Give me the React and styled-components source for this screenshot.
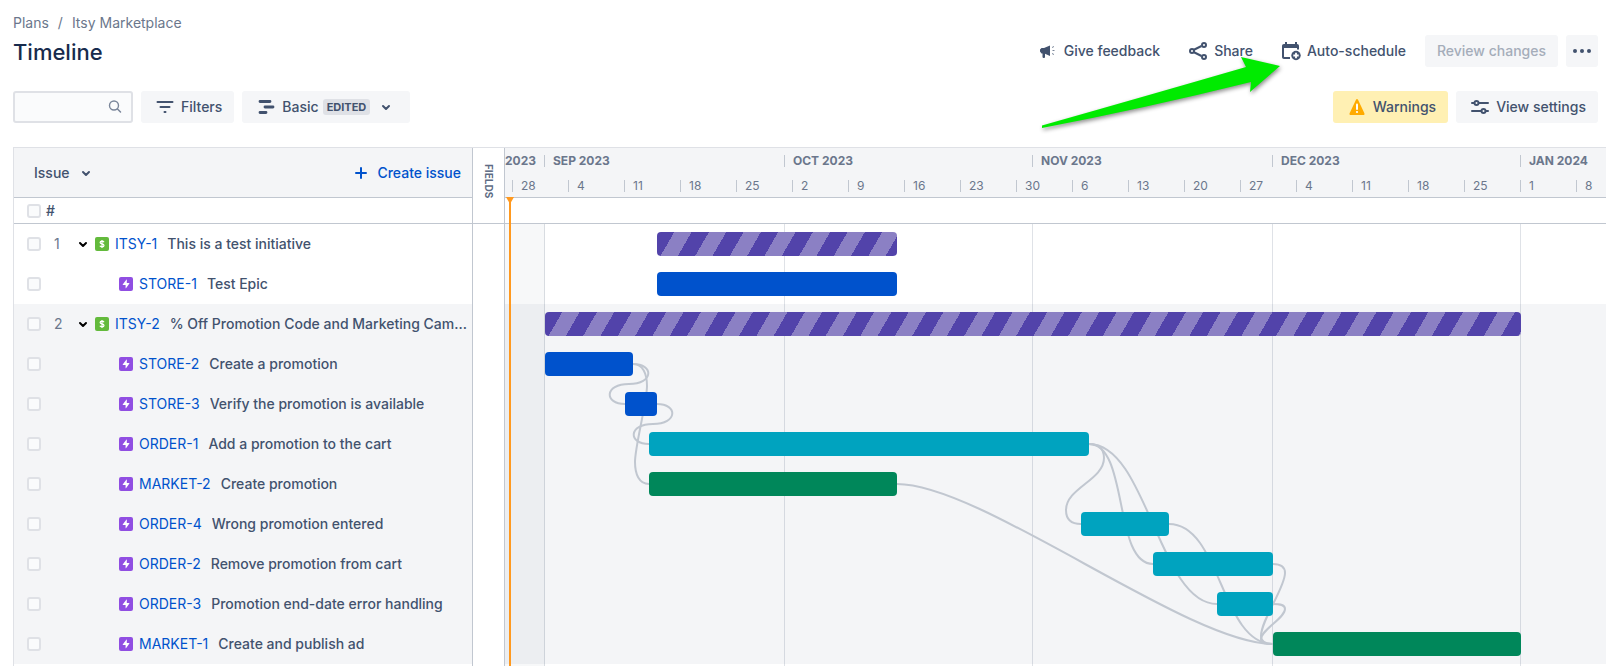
import React from "react";
import styled, { createGlobalStyle, css } from "styled-components";

const DAY = 8;
const ROW = 40;

const Global = createGlobalStyle`
  * { box-sizing: border-box; }
  body {
    margin: 0;
    background: #fff;
    color: #42526e;
    font: 500 14px/20px Inter, "Liberation Sans", sans-serif;
    overflow-x: hidden;
  }
  button, input { font: inherit; color: inherit; }
  svg { flex: none; }
`;

const Page = styled.div`
  display: flex;
  flex-direction: column;
  min-height: 100vh;
  padding-left: 13px;
`;

const Header = styled.header`
  display: flex;
  justify-content: space-between;
  align-items: flex-end;
  padding: 13px 8px 0 0;
`;

const Breadcrumbs = styled.nav`
  display: flex;
  gap: 9px;
  color: #6b778c;
  font-weight: 400;
`;

const Crumb = styled.a`
  color: inherit;
  text-decoration: none;
`;

const Title = styled.h1`
  margin: 4px 0 0;
  color: #172b4d;
  font-size: 22px;
  line-height: 30px;
  font-weight: 500;
`;

const Actions = styled.div`
  position: relative;
  display: flex;
  gap: 8px;
`;

const QuietGroup = styled.div`
  display: flex;
  gap: 4px;
`;

const Button = styled.button`
  display: flex;
  align-items: center;
  gap: 4px;
  height: 32px;
  padding: 0 ${(p) => (p.$iconOnly ? 4 : p.$tone === "quiet" ? 11 : 12)}px;
  border: 0;
  border-radius: 3px;
  white-space: nowrap;
  background: ${(p) => ({ quiet: "none", warning: "#fff0b3" }[p.$tone] || "#f5f6f8")};
  color: ${(p) => (p.disabled ? "#a5adba" : "#42526e")};
`;

const Arrow = styled.svg`
  position: absolute;
  right: 310px;
  top: 15px;
  z-index: 2;
  overflow: visible;
  pointer-events: none;
  filter: drop-shadow(1px 2px 2px rgba(0, 0, 0, 0.45));
`;

const Toolbar = styled.div`
  display: flex;
  justify-content: space-between;
  padding: 24px 8px 24px 0;
`;

const ToolGroup = styled.div`
  display: flex;
  gap: 8px;
`;

const SearchBox = styled.label`
  display: flex;
  align-items: center;
  width: 120px;
  height: 32px;
  padding: 0 4px 0 8px;
  border: 2px solid #dfe1e6;
  border-radius: 3px;
  background: #fafbfc;
  color: #7a869a;
`;

const SearchInput = styled.input`
  flex: 1;
  min-width: 0;
  border: 0;
  outline: 0;
  background: none;
`;

const Badge = styled.span`
  padding: 0 4px;
  border-radius: 3px;
  background: #dfe1e6;
  font-size: 11px;
  line-height: 16px;
  font-weight: 700;
`;

const Gantt = styled.main`
  flex: 1;
  display: grid;
  grid-template-columns: 460px 32px minmax(0, 1fr);
  border-top: 1px solid #dfe1e6;
`;

const IssuePane = styled.section`
  border-left: 1px solid #dfe1e6;
  border-right: 1px solid #c1c7d0;
`;

const IssueTable = styled.table`
  width: 100%;
  table-layout: fixed;
  border-collapse: separate;
  border-spacing: 0;
`;

const CheckCol = styled.col`
  width: 28px;
`;

const NumberCol = styled.col`
  width: 34px;
`;

const HeadCell = styled.th`
  height: ${(p) => (p.$short ? 26 : 50)}px;
  padding: 0 0 0 ${(p) => p.$left || 0}px;
  border-bottom: 1px solid #c1c7d0;
  background: ${(p) => (p.$short ? "#fff" : "#f4f5f7")};
  text-align: left;
  font-weight: 500;
`;

const HeadBar = styled.div`
  display: flex;
  justify-content: space-between;
  align-items: center;
  padding-right: 11px;
`;

const TextButton = styled.button`
  display: flex;
  align-items: center;
  gap: 4px;
  padding: 0;
  border: 0;
  background: none;
  color: ${(p) => (p.$primary ? "#0052cc" : "#42526e")};
`;

const IssueRow = styled.tr`
  background: ${(p) => (p.$shaded ? "#f4f5f7" : "#fff")};
`;

const Cell = styled.td`
  height: ${ROW}px;
  padding: 0 0 0 ${(p) => p.$left || 0}px;
`;

const RankCell = styled(Cell)`
  color: #6b778c;
  font-weight: 400;
`;

const Checkbox = styled.input.attrs({ type: "checkbox" })`
  appearance: none;
  display: block;
  width: 14px;
  height: 14px;
  margin: 0;
  border: 2px solid #dfe1e6;
  border-radius: 3px;
  background: #fafbfc;
`;

const IssueLine = styled.div`
  display: flex;
  align-items: center;
  gap: 6px;
  padding: 0 3px 0 ${(p) => (p.$child ? 43 : 0)}px;
`;

const Expander = styled.button`
  display: flex;
  flex: none;
  width: 13px;
  height: 16px;
  align-items: center;
  justify-content: center;
  padding: 0;
  border: 0;
  background: none;
  color: #000;
`;

const IssueKey = styled.a`
  color: #0052cc;
  font-weight: 400;
  text-decoration: none;
  white-space: nowrap;
`;

const Summary = styled.span`
  margin-left: 4px;
  overflow: hidden;
  text-overflow: ellipsis;
  white-space: nowrap;
`;

const FieldsPane = styled.section`
  border-right: 1px solid #c1c7d0;
`;

const FieldsHead = styled.button`
  display: flex;
  align-items: center;
  width: 100%;
  height: 76px;
  padding: 16px 0 0 0;
  border: 0;
  border-bottom: 1px solid #c1c7d0;
  background: #fff;
  color: #5e6c84;
  font-size: 10px;
  line-height: 33px;
  font-weight: 700;
  writing-mode: vertical-rl;
`;

const TimelinePane = styled.section`
  position: relative;
  display: flex;
  flex-direction: column;
  overflow: hidden;
`;

const DayGrid = styled.div`
  display: grid;
  grid-auto-columns: ${DAY}px;
  grid-auto-flow: column;
  align-items: center;
`;

const Scale = styled.div`
  height: 50px;
  border-bottom: 1px solid #c1c7d0;
  background: #f4f5f7;
  color: #6b778c;
  font-size: 12px;
  line-height: 12px;
`;

const MonthRow = styled(DayGrid)`
  height: 26px;
  font-weight: 700;
`;

const WeekRow = styled(DayGrid)`
  height: 23px;
  font-weight: 400;
`;

const Tick = styled.div`
  grid-row: 1;
  grid-column: ${(p) => p.$day + 1} / span ${(p) => p.$span};
  margin-left: -1px;
  padding-left: 8px;
  border-left: 1px solid #c1c7d0;
  white-space: nowrap;
`;

const FirstMonth = styled.div`
  grid-row: 1;
  grid-column: 1 / span 5;
  white-space: nowrap;
`;

const SprintStrip = styled.div`
  height: 26px;
  border-bottom: 1px solid #c1c7d0;
`;

const Chart = styled.div`
  position: relative;
  flex: 1;
`;

const TrackRow = styled(DayGrid)`
  height: ${ROW}px;
  background: ${(p) => (p.$shaded ? "#f4f5f7" : "#fff")};
`;

const stripes = css`
  background: repeating-linear-gradient(120deg, #5243aa 0 15px, #8b80c4 15px 30px);
`;

const Bar = styled.div`
  position: relative;
  z-index: 2;
  grid-row: 1;
  grid-column: ${(p) => p.$from + 1} / ${(p) => p.$to + 1};
  height: 24px;
  border-radius: 4px;
  background: ${(p) => ({ blue: "#0052cc", teal: "#00a3bf", green: "#00875a" }[p.$tone])};
  ${(p) => p.$tone === "initiative" && stripes}
`;

const MonthLines = styled(DayGrid)`
  position: absolute;
  inset: 0;
  z-index: 1;
  align-items: stretch;
`;

const MonthSpan = styled.div`
  grid-row: 1;
  grid-column: ${(p) => p.$from + 1} / ${(p) => p.$to + 1};
  border-right: 1px solid rgba(9, 30, 66, 0.13);
  background: ${(p) => (p.$past ? "rgba(9, 30, 66, 0.03)" : "none")};
`;

const Connectors = styled.svg`
  position: absolute;
  left: 0;
  top: 0;
  z-index: 1;
  fill: none;
  stroke: #c1c7d0;
  stroke-width: 2;
  overflow: visible;
`;

const Today = styled.div`
  position: absolute;
  top: 49px;
  bottom: 0;
  left: 4px;
  z-index: 3;
  width: 2px;
  background: #ff991f;
  &::before {
    content: "";
    position: absolute;
    top: 0;
    left: -3px;
    border: 4px solid transparent;
    border-top: 7px solid #ff991f;
    border-bottom: 0;
  }
`;

/* Icons */

const Svg = ({ children }) => (
  <svg width="24" height="24" viewBox="0 0 24 24" fill="none" aria-hidden="true">
    {children}
  </svg>
);

const Chevron = ({ width = 2 }) => (
  <Svg>
    <path d="M9 11l3 3 3-3" stroke="currentColor" strokeWidth={width} strokeLinecap="round" strokeLinejoin="round" />
  </Svg>
);

const Megaphone = () => (
  <Svg>
    <path d="M14 6.500v10.500L9 14.800V18c0 .6-.3.900-.9.900h-.8c-.5 0-.8-.3-.8-.8v-3.600H5.500L4 12.500v-2L5.500 9H8z" fill="currentColor" />
    <path d="M16 8.500l2-1M16.500 11.500h2M16 14.500l2 1" stroke="currentColor" opacity=".7" />
  </Svg>
);

const ShareIcon = () => (
  <Svg>
    <g stroke="currentColor" strokeWidth="2">
      <path d="M7.500 11l8-4M7.500 13l8 4" />
      <circle cx="6" cy="12" r="2" />
      <circle cx="18" cy="6" r="2" />
      <circle cx="18" cy="18" r="2" />
    </g>
  </Svg>
);

const CalendarPlus = () => (
  <Svg>
    <path d="M6 3h2v2h8V3h2v2c1.200 0 2 .8 2 2v3.500h-2V9H5v8.500c0 .4.200.6.600.6H11v2H5c-1.200 0-2-.8-2-2V7c0-1.200.8-2 2-2h1z" fill="currentColor" />
    <circle cx="17" cy="16.500" r="4.700" fill="currentColor" />
    <path d="M17 13.800v5.400M14.300 16.500h5.400" stroke="#fff" strokeWidth="1.800" />
  </Svg>
);

const MoreIcon = () => (
  <Svg>
    <g fill="currentColor">
      <circle cx="5" cy="12" r="2" />
      <circle cx="12" cy="12" r="2" />
      <circle cx="19" cy="12" r="2" />
    </g>
  </Svg>
);

const SearchIcon = () => (
  <Svg>
    <circle cx="11" cy="10.500" r="4.500" stroke="currentColor" strokeWidth="1.400" />
    <path d="M14.500 14l3 3" stroke="currentColor" strokeWidth="1.500" strokeLinecap="round" />
  </Svg>
);

const FilterIcon = () => (
  <Svg>
    <path d="M4.500 7h15M7.500 12h9M11.500 17h1" stroke="currentColor" strokeWidth="2" strokeLinecap="round" />
  </Svg>
);

const RoadmapIcon = () => (
  <Svg>
    <path d="M6 6.500h10M11 12h8M6 17.500h6" stroke="currentColor" strokeWidth="2.800" strokeLinecap="round" />
  </Svg>
);

const WarningIcon = () => (
  <Svg>
    <path d="M11.100 4.600c.4-.8 1.400-.8 1.800 0l6.500 13.600c.4.900-.1 1.800-1 1.800H5.600c-.9 0-1.400-.9-1-1.800z" fill="#ffab00" />
    <path d="M12 9.500v4.500" stroke="#fff" strokeWidth="2" strokeLinecap="round" />
    <circle cx="12" cy="17" r="1.100" fill="#fff" />
  </Svg>
);

const SettingsIcon = () => (
  <Svg>
    <g stroke="currentColor" strokeWidth="2" strokeLinecap="round">
      <path d="M4 8h2M11 8h9M4 16h9M18 16h2" />
      <circle cx="8.500" cy="8" r="2" />
      <circle cx="15.500" cy="16" r="2" />
    </g>
  </Svg>
);

const PlusIcon = () => (
  <Svg>
    <path d="M12 7v10M7 12h10" stroke="currentColor" strokeWidth="2" strokeLinecap="round" />
  </Svg>
);

const EpicIcon = () => (
  <svg width="14" height="14" viewBox="0 0 14 14" role="img" aria-label="Epic">
    <rect width="14" height="14" rx="2" fill="#904ee2" />
    <path d="M7.800 2.800v3.300h2.300c.3 0 .4.300.3.500L7 11.200c-.2.200-.4.100-.4-.1V7.900H4c-.3 0-.4-.3-.3-.5l3.600-4.700c.2-.2.500-.1.500.1z" fill="#fff" />
  </svg>
);

const InitiativeIcon = () => (
  <svg width="14" height="14" viewBox="0 0 14 14" role="img" aria-label="Initiative">
    <rect width="14" height="14" rx="2" fill="#63ba3c" />
    <path d="M9 5.200C8.700 4.500 8 4.200 7 4.200c-1.100 0-1.900.5-1.900 1.300C5.100 7.400 9 6.400 9 8.500c0 .8-.8 1.300-2 1.300-1.100 0-1.800-.4-2.100-1.100M7 3v8" fill="none" stroke="#fff" strokeWidth="1.200" />
  </svg>
);

/* Data: days are counted from 27 August 2023, the left edge of the chart */

const issues = [
  { rank: 1, key: "ITSY-1", summary: "This is a test initiative", from: 19, to: 49, tone: "initiative" },
  { key: "STORE-1", summary: "Test Epic", from: 19, to: 49, tone: "blue" },
  { rank: 2, key: "ITSY-2", summary: "% Off Promotion Code and Marketing Campaign", from: 5, to: 127, tone: "initiative", shaded: true },
  { key: "STORE-2", summary: "Create a promotion", from: 5, to: 16, tone: "blue", shaded: true },
  { key: "STORE-3", summary: "Verify the promotion is available", from: 15, to: 19, tone: "blue", shaded: true },
  { key: "ORDER-1", summary: "Add a promotion to the cart", from: 18, to: 73, tone: "teal", shaded: true },
  { key: "MARKET-2", summary: "Create promotion", from: 18, to: 49, tone: "green", shaded: true },
  { key: "ORDER-4", summary: "Wrong promotion entered", from: 72, to: 83, tone: "teal", shaded: true },
  { key: "ORDER-2", summary: "Remove promotion from cart", from: 81, to: 96, tone: "teal", shaded: true },
  { key: "ORDER-3", summary: "Promotion end-date error handling", from: 89, to: 96, tone: "teal", shaded: true },
  { key: "MARKET-1", summary: "Create and publish ad", from: 96, to: 127, tone: "green", shaded: true },
];

const months = [
  { label: "SEP 2023", day: 5, span: 30 },
  { label: "OCT 2023", day: 35, span: 31 },
  { label: "NOV 2023", day: 66, span: 30 },
  { label: "DEC 2023", day: 96, span: 31 },
  { label: "JAN 2024", day: 127, span: 31 },
];

const weeks = [28, 4, 11, 18, 25, 2, 9, 16, 23, 30, 6, 13, 20, 27, 4, 11, 18, 25, 1, 8];

/* Each curve is relative to the right end of its source bar */
const links = [
  ["STORE-2", "c21 0 21 20-4 20s-25 20-4 20"],
  ["STORE-2", "c10 0 14 10 14 22c0 16-12 60-12 76c0 12 4 22 14 22"],
  ["STORE-3", "c21 0 21 20-4 20s-25 20-4 20"],
  ["ORDER-1", "c10 0 15 4 15 14c0 22-38 30-38 52c0 10 5 14 15 14"],
  ["ORDER-1", "c40 0 24 120 64 120"],
  ["ORDER-1", "c58 0 70 160 128 160"],
  ["MARKET-2", "c85 0 291 160 376 160"],
  ["ORDER-4", "c52 0 52 120 104 120"],
  ["ORDER-2", "c8 0 12 3 12 9c0 15-24 47-24 63c0 5 4 8 12 8"],
  ["ORDER-3", "c8 0 12 1 12 5c0 9-24 21-24 30c0 4 4 5 12 5"],
];

const linkPath = ([key, curve]) => {
  const row = issues.findIndex((i) => i.key === key);
  return `M${issues[row].to * DAY} ${row * ROW + ROW / 2}${curve}`;
};

export default function App() {
  return (
    <Page>
      <Global />
      <Header>
        <div>
          <Breadcrumbs aria-label="Breadcrumb">
            <Crumb href="#plans">Plans</Crumb>
            <span>/</span>
            <Crumb href="#plan">Itsy Marketplace</Crumb>
          </Breadcrumbs>
          <Title>Timeline</Title>
        </div>
        <Actions>
          <QuietGroup>
            <Button $tone="quiet"><Megaphone />Give feedback</Button>
            <Button $tone="quiet"><ShareIcon />Share</Button>
            <Button $tone="quiet"><CalendarPlus />Auto-schedule</Button>
          </QuietGroup>
          <Button disabled>Review changes</Button>
          <Button $iconOnly aria-label="More"><MoreIcon /></Button>
          <Arrow width="252" height="84" viewBox="0 0 252 84" aria-hidden="true">
            <path d="M6 75.500Q110 46 210 17L205 7L244 16L214 42L215 32Q110 58 6 78z" fill="#00eb00" />
          </Arrow>
        </Actions>
      </Header>

      <Toolbar>
        <ToolGroup>
          <SearchBox>
            <SearchInput type="text" aria-label="Search issues" />
            <SearchIcon />
          </SearchBox>
          <Button><FilterIcon />Filters</Button>
          <Button><RoadmapIcon />Basic<Badge>EDITED</Badge><Chevron /></Button>
        </ToolGroup>
        <ToolGroup>
          <Button $tone="warning"><WarningIcon />Warnings</Button>
          <Button><SettingsIcon />View settings</Button>
        </ToolGroup>
      </Toolbar>

      <Gantt>
        <IssuePane>
          <IssueTable>
            <colgroup>
              <CheckCol />
              <NumberCol />
              <col />
            </colgroup>
            <thead>
              <tr>
                <HeadCell colSpan={3} $left={20}>
                  <HeadBar>
                    <TextButton>Issue<Chevron /></TextButton>
                    <TextButton $primary><PlusIcon />Create issue</TextButton>
                  </HeadBar>
                </HeadCell>
              </tr>
              <tr>
                <HeadCell $short $left={13}><Checkbox aria-label="Select all issues" /></HeadCell>
                <HeadCell $short $left={4} colSpan={2}>#</HeadCell>
              </tr>
            </thead>
            <tbody>
              {issues.map((issue) => (
                <IssueRow key={issue.key} $shaded={issue.shaded}>
                  <Cell $left={13}><Checkbox aria-label={`Select ${issue.key}`} /></Cell>
                  <RankCell $left={12}>{issue.rank}</RankCell>
                  <Cell>
                    <IssueLine $child={!issue.rank}>
                      {issue.rank && (
                        <Expander aria-label={`Collapse ${issue.key}`}><Chevron /></Expander>
                      )}
                      {issue.rank ? <InitiativeIcon /> : <EpicIcon />}
                      <IssueKey href={`#${issue.key}`}>{issue.key}</IssueKey>
                      <Summary>{issue.summary}</Summary>
                    </IssueLine>
                  </Cell>
                </IssueRow>
              ))}
            </tbody>
          </IssueTable>
        </IssuePane>

        <FieldsPane>
          <FieldsHead>FIELDS</FieldsHead>
        </FieldsPane>

        <TimelinePane>
          <Scale>
            <MonthRow>
              <FirstMonth>2023</FirstMonth>
              {months.map((m) => (
                <Tick key={m.label} $day={m.day} $span={m.span}>{m.label}</Tick>
              ))}
            </MonthRow>
            <WeekRow>
              {weeks.map((w, i) => (
                <Tick key={i} $day={1 + i * 7} $span={7}>{w}</Tick>
              ))}
            </WeekRow>
          </Scale>
          <SprintStrip />
          <Chart>
            <MonthLines>
              <MonthSpan $past $from={0} $to={5} />
              {months.slice(0, -1).map((m) => (
                <MonthSpan key={m.label} $from={m.day} $to={m.day + m.span} />
              ))}
            </MonthLines>
            <Connectors width="100%" height={issues.length * ROW} aria-hidden="true">
              {links.map((link) => (
                <path key={link.join()} d={linkPath(link)} />
              ))}
            </Connectors>
            {issues.map((issue) => (
              <TrackRow key={issue.key} $shaded={issue.shaded}>
                <Bar $from={issue.from} $to={issue.to} $tone={issue.tone} />
              </TrackRow>
            ))}
          </Chart>
          <Today />
        </TimelinePane>
      </Gantt>
    </Page>
  );
}
